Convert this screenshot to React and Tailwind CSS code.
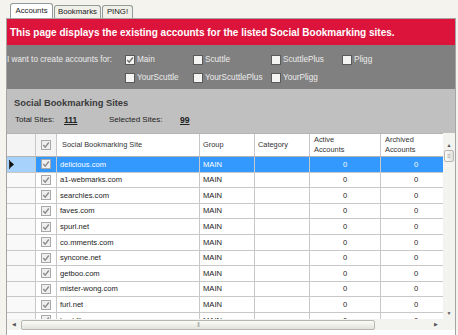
import React from 'react';

const sites = [
  'delicious.com',
  'a1-webmarks.com',
  'searchles.com',
  'faves.com',
  'spurl.net',
  'co.mments.com',
  'syncone.net',
  'getboo.com',
  'mister-wong.com',
  'furl.net',
  'backflip.com',
];

const Check = ({ checked, dim }) => (
  <span
    className={`inline-flex shrink-0 items-center justify-center w-[10px] h-[10px] border ${
      dim ? 'border-[#a8a8a8] bg-[#efefef]' : 'border-[#5a5a5a] bg-[#f4f4f2]'
    }`}
  >
    {checked && (
      <svg width="8" height="8" viewBox="0 0 8 8">
        <polyline
          points="1.3,4 3.2,6.2 6.8,1.5"
          fill="none"
          stroke={dim ? '#8a8a8a' : '#6a6a6a'}
          strokeWidth="1.3"
        />
      </svg>
    )}
  </span>
);

const Option = ({ label, checked, className }) => (
  <div className={`flex items-center gap-[2px] ${className}`}>
    <Check checked={checked} />
    <span>{label}</span>
  </div>
);

const App = () => {
  return (
    <div className="w-[458px] h-[335px] overflow-hidden bg-[#f4f3ee] text-[#1a1a1a] font-['Liberation_Sans',Arial,sans-serif]">
      {/* tabs */}
      <div className="h-[18px] flex items-end pl-[10px] gap-[1px] text-[7.8px]">
        <div className="h-[15px] w-[43px] bg-white border border-b-0 border-[#919b9c] rounded-t-[3px] flex items-center justify-center">
          Accounts
        </div>
        <div className="h-[13px] w-[47px] bg-[#f0efe8] border border-b-0 border-[#919b9c] rounded-t-[3px] flex items-center justify-center">
          Bookmarks
        </div>
        <div className="h-[13px] w-[31px] bg-[#f0efe8] border border-b-0 border-[#919b9c] rounded-t-[3px] flex items-center justify-center">
          PING!
        </div>
      </div>

      {/* panel */}
      <div className="ml-[6px] w-[450px] h-[330px] border border-[#a5a5a5] bg-white flex flex-col">
        <div className="h-[26px] shrink-0 bg-[#dc143c] text-white font-bold text-[10px] flex items-center pl-[3px]">
          This page displays the existing accounts for the listed Social Bookmarking sites.
        </div>

        <div className="h-[44px] shrink-0 bg-[#808080] text-[#ececec] text-[8.2px] flex pt-[10px]">
          <div className="w-[118px] leading-[10px]">I want to create accounts for:</div>
          <div className="flex flex-col gap-[8px]">
            <div className="flex leading-[10px]">
              <Option label="Main" checked className="w-[68px]" />
              <Option label="Scuttle" className="w-[78px]" />
              <Option label="ScuttlePlus" className="w-[71px]" />
              <Option label="Pligg" />
            </div>
            <div className="flex leading-[10px]">
              <Option label="YourScuttle" className="w-[68px]" />
              <Option label="YourScuttlePlus" className="w-[78px]" />
              <Option label="YourPligg" />
            </div>
          </div>
        </div>

        <div className="h-[44px] shrink-0 bg-[#c0c0c0] pl-[7px] pt-[8px]">
          <div className="font-bold text-[9.3px] text-[#3a3a3a] leading-[12px]">Social Bookmarking Sites</div>
          <div className="flex items-end leading-[12px] mt-[5px] text-[8px] text-[#222]">
            <span className="w-[50px] pl-[1px]">Total Sites:</span>
            <span className="w-[45px] font-bold underline text-[8.6px]">111</span>
            <span className="w-[71px]">Selected Sites:</span>
            <span className="font-bold underline text-[8.6px]">99</span>
          </div>
        </div>

        {/* grid */}
        <div className="h-[197px] shrink-0 flex text-[7.6px]">
          <div className="w-[436px] flex flex-col">
            <div className="flex-1 overflow-hidden bg-white">
              <div className="flex h-[24px] border-t border-b border-[#b4b4b4] bg-white text-[#333] text-[7.4px]">
                <div className="w-[29px] border-r border-[#c8c8c8] bg-[#f4f4f4]"></div>
                <div className="w-[21px] border-r border-[#c8c8c8] flex items-center justify-center bg-[#f4f4f4]">
                  <Check checked dim />
                </div>
                <div className="w-[143px] border-r border-[#c8c8c8] flex items-center pl-[5px]">Social Bookmarking Site</div>
                <div className="w-[55px] border-r border-[#c8c8c8] flex items-center pl-[3px]">Group</div>
                <div className="w-[55px] border-r border-[#c8c8c8] flex items-center pl-[3px]">Category</div>
                <div className="w-[71px] border-r border-[#c8c8c8] flex items-center pl-[4px] leading-[10px]">Active<br />Accounts</div>
                <div className="w-[62px] flex items-center pl-[4px] leading-[10px]">Archived<br />Accounts</div>
              </div>
              {sites.map((s, i) => {
                const sel = i === 0;
                return (
                  <div key={s} className={`flex h-[15.6px] border-b border-[#c8c8c8] ${sel ? 'bg-[#3399ff] text-white' : 'text-[#222]'}`}>
                    <div className={`w-[29px] border-r border-[#c8c8c8] flex items-center ${sel ? 'bg-[#a6d2fb]' : 'bg-[#f9f9f9]'}`}>
                      {sel && (
                        <svg width="6" height="9" viewBox="0 0 6 9" className="ml-[2px]">
                          <rect x="0" y="0" width="1" height="9" fill="#333" />
                          <polygon points="1,1 5,4.5 1,8" fill="#111" />
                        </svg>
                      )}
                    </div>
                    <div className="w-[21px] border-r border-[#c8c8c8] flex items-center justify-center">
                      <Check checked dim />
                    </div>
                    <div className="w-[143px] border-r border-[#c8c8c8] flex items-center pl-[3px]">{s}</div>
                    <div className="w-[55px] border-r border-[#c8c8c8] flex items-center pl-[3px]">MAIN</div>
                    <div className="w-[55px] border-r border-[#c8c8c8]"></div>
                    <div className="w-[71px] border-r border-[#c8c8c8] flex items-center justify-center">0</div>
                    <div className="w-[62px] flex items-center justify-center pl-[8px]">0</div>
                  </div>
                );
              })}
            </div>
            {/* horizontal scrollbar */}
            <div className="h-[11px] shrink-0 bg-[#f3f3f0] flex items-center">
              <span className="w-[14px] text-center text-[5px] text-[#555]">◀</span>
              <div className="w-[354px] h-[10px] rounded-[2px] border border-[#b7b7b0] bg-gradient-to-b from-[#fbfbf9] to-[#e2e2dc] flex items-center justify-center">
                <span className="text-[6px] text-[#999] tracking-[-1px]">|||</span>
              </div>
              <div className="flex-1"></div>
              <span className="w-[14px] text-center text-[5px] text-[#555]">▶</span>
            </div>
          </div>
          {/* vertical scrollbar */}
          <div className="w-[12px] bg-[#f3f3f0] flex flex-col items-center">
            <span className="text-[5px] text-[#555] mt-[9px] leading-[6px]">▲</span>
            <div className="w-[10px] h-[12px] mt-[2px] rounded-[2px] border border-[#b7b7b0] bg-gradient-to-r from-[#fbfbf9] to-[#e2e2dc] flex items-center justify-center">
              <span className="text-[6px] text-[#999] leading-[4px]">≡</span>
            </div>
            <div className="flex-1"></div>
            <span className="text-[5px] text-[#555] mb-[14px] leading-[6px]">▼</span>
          </div>
        </div>
      </div>
    </div>
  );
};

export default App;
